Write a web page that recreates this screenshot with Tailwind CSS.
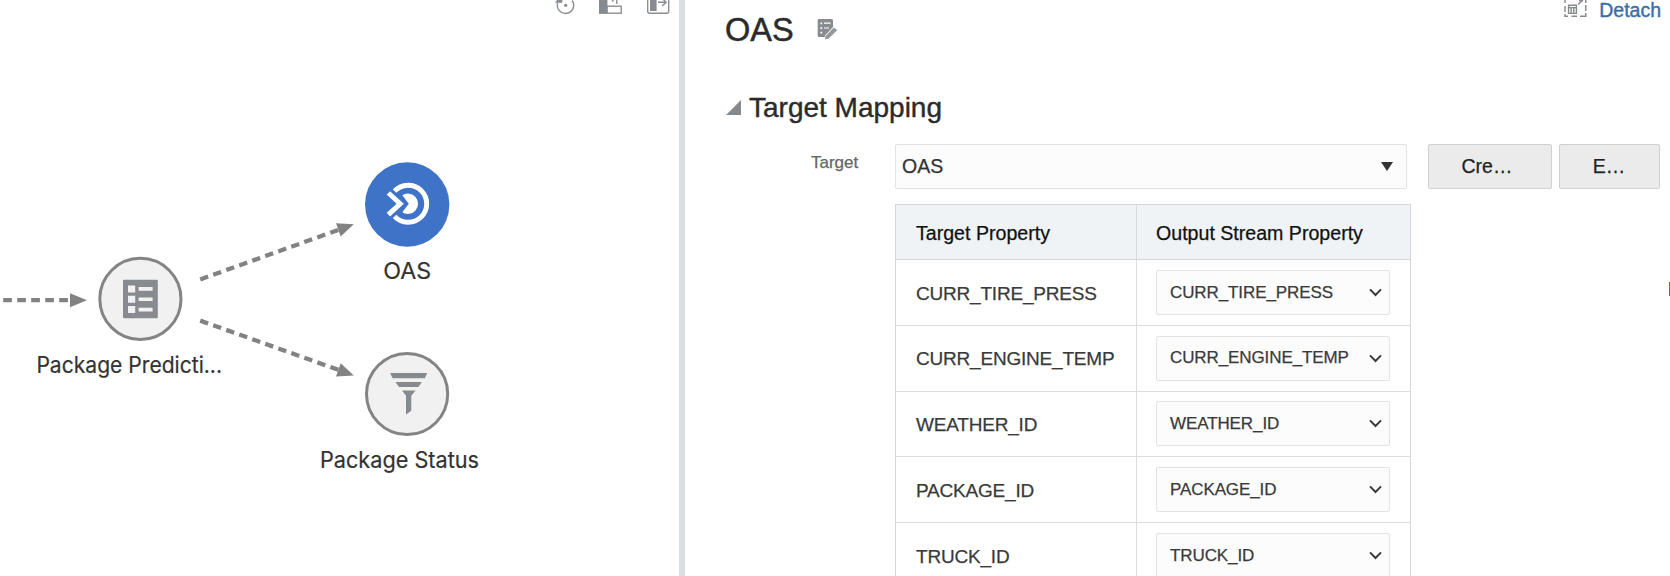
<!DOCTYPE html>
<html lang="en">
<head>
<meta charset="utf-8">
<title>OAS</title>
<script src="https://cdn.jsdelivr.net/npm/@tailwindcss/browser@4"></script>
</head>
<body class="w-[1670px] h-[576px] overflow-hidden bg-white font-['Liberation_Sans',Arial,sans-serif] text-[#333]">
<div class="flex h-[576px]">
  <section class="w-[679px] shrink-0 overflow-hidden">
    <svg class="block" width="679" height="576" viewBox="0 0 679 576" fill="none">
      <!-- toolbar -->
      <g stroke="#8b8e92" stroke-width="1.4">
        <path d="M572.2 0.5A8.2 8.2 0 1 1 557.6 3"/>
        <rect x="607" y="6.2" width="14.2" height="7"/>
        <path d="M616.8 -1V4M612 1.5L613.5 0"/>
        <rect x="647.7" y="-6" width="21" height="19.3" rx="2"/>
        <path d="M658 2.3H666M662.3 -1.5L666.2 2.3L662.3 6.1"/>
      </g>
      <g fill="#878a8e">
        <circle cx="565.7" cy="5.3" r="1.6"/>
        <path d="M554.8 2.8L558 -1H562.3V2.8Z"/>
        <rect x="599" y="-2" width="8.4" height="15.9"/>
        <rect x="650" y="-2" width="6.6" height="13"/>
      </g>
      <!-- edges -->
      <g stroke="#828282" stroke-width="4.3" stroke-dasharray="8.7 5.3">
        <path d="M3.2 300.2H70"/>
        <path stroke-dasharray="8.4 5.42" d="M200.2 279.4L338.5 229.8"/>
        <path stroke-dasharray="8.4 5.42" d="M200.2 320.6L338.5 369.9"/>
      </g>
      <g fill="#828282">
        <path d="M70 293.2L87 300.2L70 307.2Z"/>
        <path d="M336 223.3L353.8 224.3L340.7 236.5Z"/>
        <path d="M340.7 363.3L353.8 375.5L336 376.5Z"/>
      </g>
      <!-- nodes -->
      <circle cx="140.4" cy="298.9" r="40.6" fill="#f1f1f1" stroke="#848484" stroke-width="3"/>
      <path fill="#878b8f" d="M124 279.7H156.8Q157.8 279.7 157.8 280.7V317.3Q157.8 318.3 156.8 318.3H124Q123 318.3 123 317.3V280.7Q123 279.7 124 279.7Z"/>
      <path fill="#f1f1f1" d="M128 285.4h7.2v7h-7.2zM128 295.8h7.2v7h-7.2zM128 306h7.2v7h-7.2zM138.6 287.1h14v3.6h-14zM138.6 297.5h14v3.6h-14zM138.6 307.8h14v3.6h-14z"/>
      <circle cx="407.2" cy="204.5" r="42.2" fill="#3f73c8"/>
      <g stroke="#fff" stroke-width="4.9">
        <path d="M394.6 191.2A18.5 18.5 0 1 1 394.6 216.3"/>
        <path d="M388.4 193L400.2 203.7L388.4 214.6"/>
      </g>
      <path fill="#fff" d="M402.3 195.2A10.2 10.2 0 1 1 402.3 212.3L408.8 203.7Z"/>
      <circle cx="407.1" cy="394" r="40.6" fill="#f1f1f1" stroke="#848484" stroke-width="3"/>
      <path fill="#878b8f" d="M390 373H427.2L424.8 378.3H392.6ZM395.4 382H421.8L418.4 387.1H399ZM402 390.4H415.6L411.3 395.8V410.8L406 414.5V395.8Z"/>
      <!-- node captions -->
      <g fill="#333" stroke="#333" stroke-width=".2" font-family="Inter, sans-serif" font-size="22.5">
        <text x="36.4" y="373" textLength="185.6" lengthAdjust="spacingAndGlyphs">Package Predicti...</text>
        <text x="383.3" y="279" textLength="48" lengthAdjust="spacingAndGlyphs">OAS</text>
        <text x="320" y="468" textLength="159" lengthAdjust="spacingAndGlyphs">Package Status</text>
      </g>
    </svg>
  </section>
  <div class="w-1.5 shrink-0 bg-[#d7dfe5]"></div>
  <section class="flex flex-1 flex-col overflow-hidden [-webkit-text-stroke-width:0.25px]">
    <header class="flex h-[92px] shrink-0 items-start justify-between pl-[40px] pr-[9px]">
      <div class="flex items-start pt-[10px]">
        <h1 class="w-[92px] text-[32.5px] leading-[40px] text-[#2b2b2b] [-webkit-text-stroke-width:0.5px]">OAS</h1>
        <svg class="mt-2" width="21" height="22" viewBox="0 0 21 22">
          <path fill="#888c90" d="M2 1H14.5Q16 1 16 2.5V9L7.8 17.8V19H2Q.7 19 .7 17.7V2.3Q.7 1 2 1Z"/>
          <path fill="#fff" d="M3.4 4.4h1.8v1.8H3.4zM3.4 9.2h1.8V11H3.4zM3.4 13.8h1.8v1.8H3.4zM7 4.6h6.6v1.2H7zM7 9.4h5v1.2H7z"/>
          <path fill="#94989b" d="M8.4 18.2L16.8 9.6L20.2 12.2L11.6 20.6L8 21.4Z"/>
        </svg>
      </div>
      <div class="flex items-start">
        <svg width="23" height="18" viewBox="0 0 23 18" fill="none" stroke="#85898d" stroke-width="1.4">
          <path d="M1 0V3M1 6V12M1 14V16.2H4M7.5 16.2H13M16 16.2H21.8V13M21.8 11V5M21.8 3V0" />
          <path d="M4.6 5.2H12.4V13.4H4.6ZM4.6 7.6H12.4M7.2 7.6V13.4M9.8 7.6V13.4M14 4.5L19 0M15 .5H19"/>
        </svg>
        <a class="ml-[12px] text-[19.5px] leading-[20px] text-[#3a6ea8] [-webkit-text-stroke:0.4px_#3a6ea8]">Detach</a>
      </div>
    </header>
    <div class="flex h-[52px] shrink-0 items-start pl-[41px]">
      <svg class="mt-[7px]" width="16" height="17" viewBox="0 0 16 17"><path fill="#85898c" d="M0 16L15 1V16Z"/></svg>
      <h2 class="ml-[7px] text-[28px] leading-[32px] text-[#2b2b2b] [-webkit-text-stroke-width:0.4px]">Target Mapping</h2>
    </div>
    <div class="flex h-[60px] shrink-0 items-start">
      <label class="w-[210px] pl-[126px] pt-[8px] text-[17px] leading-[22px] text-[#666]">Target</label>
      <div class="flex h-[45px] w-[512px] items-center justify-between rounded-xs border border-[#e3e3e3] bg-[#fcfcfc] pl-1.5 pr-[13px] text-[19.5px]">
        <span>OAS</span>
        <svg width="12" height="9" viewBox="0 0 12 9"><path fill="#333" d="M0 0H12L6 9Z"/></svg>
      </div>
      <button class="ml-[21px] flex h-[45px] w-[124px] items-center justify-center rounded-xs border border-[#cfcfcf] bg-[#ebebeb] pr-1.5 text-[19.5px] text-[#222]">Cre…</button>
      <button class="ml-[7px] flex h-[45px] w-[101px] items-center justify-center rounded-xs border border-[#cfcfcf] bg-[#ebebeb] pr-px text-[19.5px] text-[#222]">E…</button>
    </div>
    <div class="flex min-h-0 flex-1 items-start">
      <div id="table" class="ml-[210px] w-[516px] shrink-0 border-x border-t border-[#d3d7da]">
        <div class="flex h-[55px] border-b border-[#d3d7da] bg-[#eff3f6] text-[19.6px] text-[#111]">
          <div class="flex w-[241px] items-center border-r border-[#d8dbde] pl-5 pt-1">Target Property</div>
          <div class="flex items-center pl-[19px] pt-1">Output Stream Property</div>
        </div>
      </div>
      <div class="mt-[78px] ml-auto h-[14px] w-px bg-[#3b6cc9]"></div>
    </div>
  </section>
</div>
<template id="row">
  <div class="flex h-[65.75px] border-b border-[#dedede]">
    <div class="name flex w-[241px] items-center border-r border-[#dedede] pl-5 pt-[3px] text-[19px] tracking-[-0.2px] text-[#3a3a3a]"></div>
    <div class="flex items-center pl-[19px]">
      <div class="flex h-[45px] w-[234px] items-center justify-between rounded-xs border border-[#e3e3e3] bg-[#fcfcfc] pl-[13px] pr-[7px] text-[17px] tracking-[-0.1px] text-[#3a3a3a]">
        <span class="value"></span>
        <svg width="13" height="9" viewBox="0 0 13 9" fill="none" stroke="#3a3a3a" stroke-width="2"><path d="M1 1.4L6.5 7L12 1.4"/></svg>
      </div>
    </div>
  </div>
</template>
<script>
  const table = document.getElementById('table');
  const row = document.getElementById('row');
  for (const name of ['CURR_TIRE_PRESS', 'CURR_ENGINE_TEMP', 'WEATHER_ID', 'PACKAGE_ID', 'TRUCK_ID']) {
    const r = row.content.cloneNode(true);
    r.querySelector('.name').textContent = name;
    r.querySelector('.value').textContent = name;
    table.append(r);
  }
</script>
</body>
</html>
